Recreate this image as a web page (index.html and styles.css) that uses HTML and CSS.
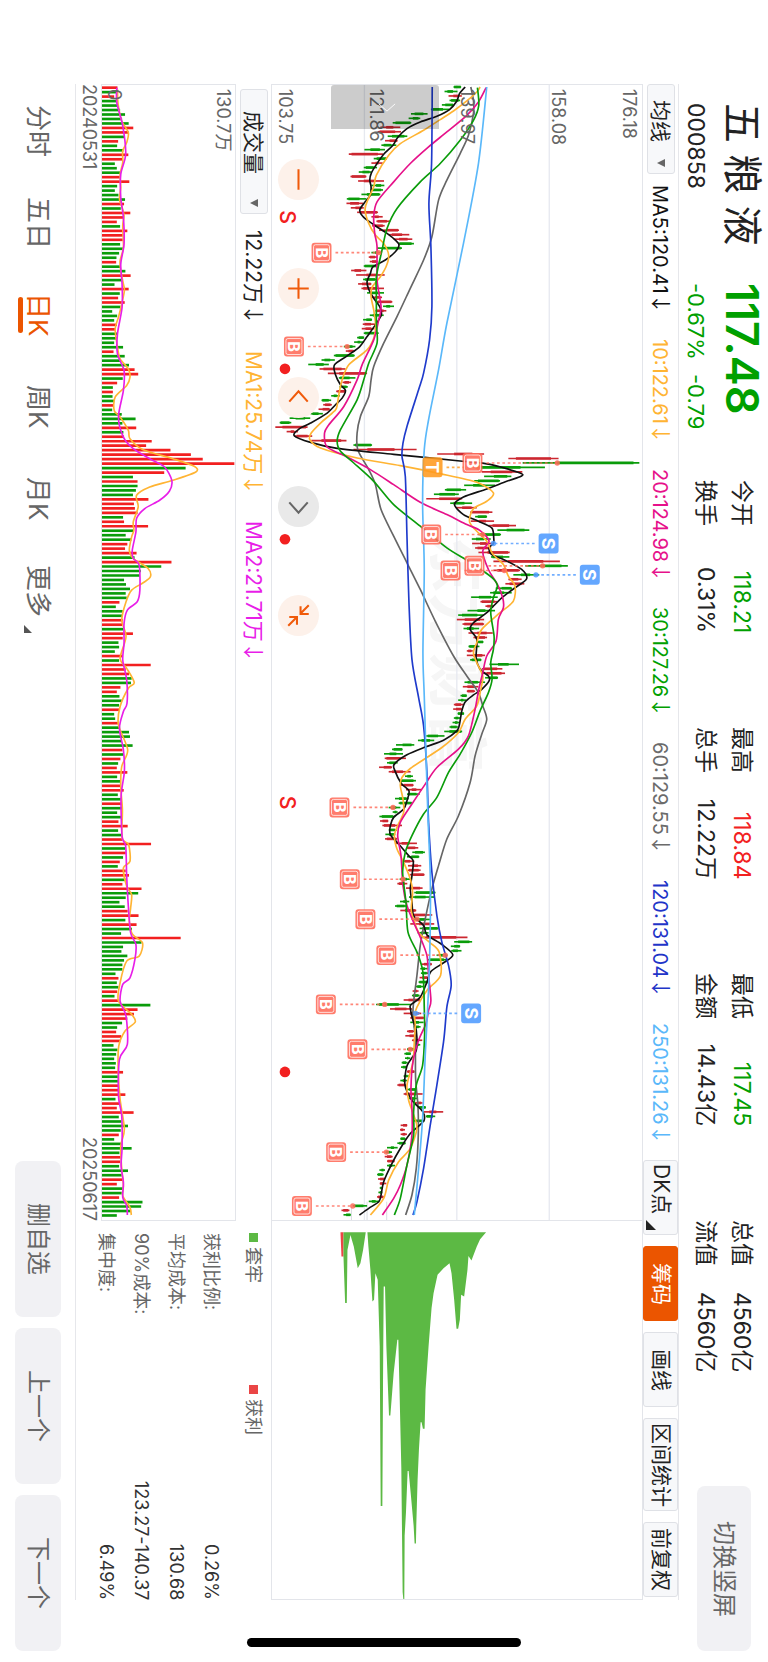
FILE: index.html
```html
<!DOCTYPE html>
<html lang="zh-CN">
<head>
<meta charset="utf-8">
<meta name="viewport" content="width=device-width, initial-scale=1">
<title>五粮液 000858</title>
<link rel="stylesheet" href="styles.css">
</head>
<body>
<main class="app">
  <header class="quote">
    <div class="quote-id">
      <h1 class="quote-name">五 粮 液</h1>
      <p class="quote-code">000858</p>
    </div>
    <div class="quote-price down">
      <p class="price">117.48</p>
      <p class="change"><span>-0.67%</span><span>-0.79</span></p>
    </div>
    <div class="quote-stats">
      <dl class="stat"><dt>今开</dt><dd class="down">118.21</dd><dt>换手</dt><dd>0.31%</dd></dl>
      <dl class="stat"><dt>最高</dt><dd class="up">118.84</dd><dt>总手</dt><dd>12.22万</dd></dl>
      <dl class="stat"><dt>最低</dt><dd class="down">117.45</dd><dt>金额</dt><dd>14.43亿</dd></dl>
      <dl class="stat"><dt>总值</dt><dd>4560亿</dd><dt>流值</dt><dd>4560亿</dd></dl>
    </div>
    <button class="soft-button rotate-button" type="button">切换竖屏</button>
  </header>

  <section class="ma-bar" aria-label="均线">
    <div class="ma-list">
      <div class="picker picker-ma">
        <select aria-label="主图指标"><option>均线</option></select>
        <svg class="picker-arrow" viewBox="0 0 8 8" aria-hidden="true"><path d="M0 4L8 0V8Z"/></svg>
      </div>
      <span class="ma5">MA5:120.41<i class="trend">↓</i></span>
      <span class="ma10">10:122.61<i class="trend">↓</i></span>
      <span class="ma20">20:124.98<i class="trend">↓</i></span>
      <span class="ma30">30:127.26<i class="trend">↓</i></span>
      <span class="ma60">60:129.55<i class="trend">↓</i></span>
      <span class="ma120">120:131.04<i class="trend">↓</i></span>
      <span class="ma250">250:131.26<i class="trend">↓</i></span>
    </div>
    <div class="tools">
      <button class="tool tool-menu" type="button">DK点<svg class="corner" viewBox="0 0 10 10" aria-hidden="true"><path d="M0 0V10H10Z"/></svg></button>
      <button class="tool active" type="button">筹码</button>
      <button class="tool" type="button">画线</button>
      <button class="tool tool-wide" type="button">区间统计</button>
      <button class="tool" type="button">前复权</button>
    </div>
  </section>

  <section class="workspace">
    <div class="price-chart">
      <span class="watermark" aria-hidden="true">东方财富</span>
      <svg id="price" class="plot" viewBox="34 14 1113 3411" preserveAspectRatio="none" role="img" aria-label="日K线"></svg>
      <ul class="axis">
        <li><span>176.18</span><span>158.08</span></li>
        <li><span>139.97</span></li>
        <li><span>121.86</span></li>
        <li><span>103.75</span></li>
      </ul>
      <button class="handle" type="button" aria-label="收起"><svg viewBox="0 0 20 10" aria-hidden="true"><path d="M1 1L10 9L19 1"/></svg></button>
      <div class="controls">
        <button class="round" type="button" aria-label="缩小"><svg viewBox="0 0 40 40" aria-hidden="true"><path d="M20 10V30"/></svg></button>
        <button class="round" type="button" aria-label="放大"><svg viewBox="0 0 40 40" aria-hidden="true"><path d="M20 10V30M10 20H30"/></svg></button>
        <button class="round" type="button" aria-label="左移"><svg viewBox="0 0 40 40" aria-hidden="true"><path d="M11 24L20 14L29 24"/></svg></button>
        <button class="round muted" type="button" aria-label="右移"><svg viewBox="0 0 40 40" aria-hidden="true"><path d="M11 16L20 26L29 16"/></svg></button>
        <button class="round" type="button" aria-label="退出全屏"><svg viewBox="0 0 40 40" aria-hidden="true"><path d="M30 10L22 18M22 11V18.500H30M10 30L18 22M11 21.500H18.500V29"/></svg></button>
      </div>
    </div>

    <div class="chip-chart">
      <svg id="chips" class="plot" viewBox="34 3423 1113 1137" preserveAspectRatio="none" role="img" aria-label="筹码分布"></svg>
    </div>

    <div class="volume">
      <div class="volume-head">
        <div class="picker picker-volume">
          <select aria-label="副图指标"><option>成交量</option></select>
          <svg class="picker-arrow" viewBox="0 0 8 8" aria-hidden="true"><path d="M0 4L8 0V8Z"/></svg>
        </div>
        <span>12.22万<i class="trend">↓</i></span>
        <span class="ma10">MA1:25.74万<i class="trend">↓</i></span>
        <span class="vma2">MA2:21.71万<i class="trend">↓</i></span>
      </div>
      <div class="volume-chart">
        <svg id="volume" class="plot" viewBox="305 42 404 3411" preserveAspectRatio="none" role="img" aria-label="成交量"></svg>
        <ul class="axis axis-volume"><li><span>130.7万</span><span>0</span></li></ul>
      </div>
      <div class="dates"><span>20240531</span><span>20250617</span></div>
    </div>

    <div class="chip-info">
      <div class="legend"><span class="key key-green">套牢</span><span class="key key-red">获利</span></div>
      <dl class="facts">
        <div><dt>获利比例:</dt><dd>0.26%</dd></div>
        <div><dt>平均成本:</dt><dd>130.68</dd></div>
        <div><dt>90%成本:</dt><dd>123.27-140.37</dd></div>
        <div><dt>集中度:</dt><dd>6.49%</dd></div>
      </dl>
    </div>
  </section>

  <footer class="bottom">
    <nav class="tabs">
      <button type="button">分时</button>
      <button type="button">五日</button>
      <button type="button" class="current">日K</button>
      <button type="button">周K</button>
      <button type="button">月K</button>
      <button type="button" class="more">更多<svg class="corner" viewBox="0 0 10 10" aria-hidden="true"><path d="M0 0V10H10Z"/></svg></button>
    </nav>
    <div class="actions">
      <button class="soft-button" type="button">删自选</button>
      <button class="soft-button" type="button">上一个</button>
      <button class="soft-button" type="button">下一个</button>
    </div>
  </footer>
  <div class="home-indicator"></div>
</main>
<script src="chart.js"></script>
</body>
</html>
```

FILE: styles.css
```css
* { box-sizing: border-box; }

body {
  margin: 0;
  background: #fff;
}

h1, p, dl, dd, ul {
  margin: 0;
  padding: 0;
  font-weight: 400;
}

ul { list-style: none; }

svg { writing-mode: horizontal-tb; }

button, select {
  margin: 0;
  padding: 0;
  border: 0;
  background: none;
  color: inherit;
  font: inherit;
  writing-mode: inherit;
  text-orientation: inherit;
}

.app {
  position: relative;
  display: flex;
  flex-direction: column;
  width: 100%;
  height: 100vh;
  min-height: 1500px;
  overflow: hidden;
  writing-mode: vertical-rl;
  text-orientation: sideways;
  font-family: Inter, "Noto Sans CJK SC", sans-serif;
  font-size: 20px;
  line-height: 28px;
  color: #222;
  white-space: nowrap;
}

.down { color: #00a000; }
.up { color: #f22020; }
.ma5 { color: #111; }
.ma10 { color: #ffb433; }
.ma20 { color: #e6118a; }
.ma30 { color: #00a000; }
.ma60 { color: #6b6b6b; }
.ma120 { color: #1f35c8; }
.ma250 { color: #5ab8fa; }
.vma2 { color: #e81ee8; }

.trend {
  font-family: "Noto Sans CJK SC", sans-serif;
  font-style: normal;
}

/* quote header */
.quote {
  display: grid;
  grid-template-columns: 180px 197px 1fr 165px;
  block-size: 89px;
  padding-block-start: 8px;
  padding-inline: 103px 11px;
}

.quote-id, .quote-price {
  display: flex;
  flex-direction: column;
  gap: 14px;
}

.quote-name {
  font-size: 40px;
  line-height: 36px;
}

.quote-code, .change {
  font-size: 23px;
  line-height: 28px;
}

.price {
  font-size: 45px;
  line-height: 36px;
  font-weight: 600;
}

.change {
  display: flex;
  gap: 14px;
  font-size: 22px;
}

.quote-stats {
  display: flex;
  justify-content: space-between;
  align-items: start;
  margin-inline-end: 113px;
}

.stat {
  display: grid;
  grid-template-columns: auto 1fr;
  inline-size: 153px;
  font-size: 23px;
  line-height: 36px;
}

.stat dd { text-align: end; }

.soft-button {
  border-radius: 8px;
  background: #f1f1f4;
  color: #666;
  font-size: 24px;
  text-align: center;
}

.rotate-button {
  block-size: 54px;
  align-self: start;
  margin-block-start: 9px;
}

/* indicator bar */
.ma-bar {
  display: flex;
  justify-content: space-between;
  align-items: center;
  block-size: 36px;
  margin-inline: 84px 62px;
  border-block-start: 1px solid #e6e7eb;
}

.ma-list {
  display: flex;
  align-items: center;
  gap: 25px;
}

.picker {
  position: relative;
  block-size: 28px;
  border: 1px solid #dfe1e6;
  border-radius: 3px;
  background: #f7f8fa;
}

.picker select {
  appearance: none;
  inline-size: 100%;
  block-size: 100%;
  padding-inline-start: 15px;
  font-size: 21px;
  line-height: 26px;
}

.picker-ma {
  inline-size: 90px;
  margin-inline-end: -14px;
}

.picker-volume {
  inline-size: 125px;
  margin-inline-end: -10px;
}

.picker-volume select { padding-inline-start: 21px; }

.picker-arrow {
  position: absolute;
  right: 9px;
  bottom: 6px;
  width: 8px;
  height: 8px;
  fill: #666;
  pointer-events: none;
}

.tools {
  display: flex;
  gap: 11px;
  padding-inline-end: 3px;
}

.tool {
  position: relative;
  inline-size: 75px;
  block-size: 35px;
  border: 1px solid #dfe1e6;
  border-radius: 3px;
  background: #f7f8fa;
  font-size: 21px;
  text-align: center;
}

.tool-wide { inline-size: 93px; }

.tool.active {
  border-color: #eb5500;
  background: #eb5500;
  color: #fff;
}

.tool-menu { padding-inline-end: 16px; }

.corner {
  position: absolute;
  left: 2px;
  bottom: 4px;
  width: 10px;
  height: 10px;
  fill: #222;
}

/* charts */
.workspace {
  flex: 1;
  display: grid;
  grid-template-columns: 3fr 1fr;
  grid-template-rows: 1fr 195px;
  min-block-size: 0;
  margin-inline: 84px 62px;
  border-block-end: 1px solid #e6e7eb;
}

.price-chart, .chip-chart {
  position: relative;
  border: 1px solid #e3e5ea;
}

.chip-chart { border-inline-start: 0; }

.plot {
  position: absolute;
  inset: 0;
  width: 100%;
  height: 100%;
}

.watermark {
  position: absolute;
  inset: 0;
  display: flex;
  align-items: center;
  justify-content: center;
  font-size: 60px;
  font-weight: 700;
  color: #f6f6f6;
}

.axis {
  position: absolute;
  inset: 0;
  display: flex;
  flex-direction: column;
  padding-inline-start: 4px;
  padding-block: 3px;
  font-size: 18px;
  line-height: 20px;
  color: #666;
}

.axis li {
  flex: 1;
  display: flex;
  flex-direction: column;
}

.axis li span:last-child { margin-block-start: auto; }

.axis-volume { padding-block: 2px; }

.handle {
  position: absolute;
  inset-block-end: 59px;
  inset-inline-start: 0;
  block-size: 108px;
  inline-size: 44px;
  border-radius: 3px 3px 0 0;
  background: rgb(0 0 0 / 20%);
}

.handle svg {
  width: 18px;
  height: 9px;
  fill: none;
  stroke: #fff;
  stroke-width: 1px;
}

.controls {
  position: absolute;
  inset-block-end: 6px;
  inset-inline-start: 74px;
  display: flex;
  gap: 68px;
}

.round {
  display: flex;
  inline-size: 41px;
  block-size: 41px;
  border-radius: 50%;
  background: #fdf1ea;
  color: #f05a0a;
}

.round.muted {
  background: #e9e9e9;
  color: #666;
}

.round svg {
  width: 41px;
  height: 41px;
  fill: none;
  stroke: currentColor;
  stroke-width: 2px;
}

.volume {
  display: flex;
  flex-direction: column;
}

.volume-head {
  display: flex;
  align-items: center;
  gap: 26px;
  block-size: 35px;
  padding-inline-start: 5px;
  font-size: 21px;
}

.volume-chart {
  position: relative;
  flex: 1;
  border: 1px solid #e3e5ea;
}

.dates {
  display: flex;
  justify-content: space-between;
  block-size: 25px;
  font-size: 18px;
  line-height: 24px;
  color: #666;
}

.chip-info {
  padding-inline-start: 12px;
  font-size: 18px;
  color: #666;
}

.legend {
  display: grid;
  grid-template-columns: 152px 1fr;
  block-size: 42px;
  line-height: 36px;
}

.key {
  display: flex;
  align-items: center;
  align-self: start;
  gap: 5px;
}

.key::before {
  content: "";
  inline-size: 9px;
  block-size: 9px;
  background: #5cb944;
}

.key-red::before { background: #ea4545; }

.facts div {
  display: flex;
  justify-content: space-between;
  line-height: 35px;
}

.facts dd { color: #333; }

/* bottom bar */
.bottom {
  display: flex;
  justify-content: space-between;
  align-items: center;
  block-size: 75px;
  padding-inline: 85px 11px;
}

.tabs {
  display: flex;
  font-size: 26px;
  line-height: 46px;
  color: #666;
}

.tabs button {
  position: relative;
  inline-size: 92px;
  text-align: center;
}

.tabs .current { color: #eb5500; }

.tabs .current::after {
  content: "";
  position: absolute;
  inset-block-end: 3px;
  inset-inline: 28px;
  block-size: 5px;
  border-radius: 3px;
  background: #eb5500;
}

.tabs .corner {
  left: 9px;
  bottom: 4px;
  width: 8px;
  height: 8px;
  fill: #555;
}

.actions {
  display: flex;
  gap: 11px;
}

.actions .soft-button {
  inline-size: 156px;
  block-size: 46px;
}

.home-indicator {
  position: absolute;
  left: 247px;
  right: 247px;
  bottom: 15px;
  height: 9px;
  border-radius: 5px;
  background: #000;
}
```

FILE: chart.js
```js
// Chart units are thirds of a pixel; price runs along x, time runs along y.
const STEP = 13.45;
const RED = "#cc2730";
const GREEN = "#0a9c0a";
const GRID = "#e6e9f0";

const candles = `g580-603 g553-592 r565-605 g568-600 g545-580 g512-568 g452-502 g445-480 g397-453 r360-420
r352-422 g382-441 r374-412 g363-408 g312-374 r265-368 g340-380 r333-367 g310-350 g295-333
r270-318 r293-371 g333-372 g330-368 g303-360 g259-318 r258-308 r271-310 r290-353 r333-367
r348-390 r335-373 r356-416 r385-447 r400-456 g413-461 g350-425 g333-365 r325-350 r328-352
g310-350 r272-318 r287-373 g308-350 r293-333 r303-371 g320-371 r333-365 r345-396 g368-401
r345-378 g328-370 g308-335 r307-345 r304-342 g310-355 g290-311 g281-310 g250-285 r256-283
g220-283 g183-223 g143-205 r177-255 r202-320 g235-285 r246-272 g237-262 r227-255 g212-238
g183-212 r188-214 r174-208 g150-187 g87-149 g57-92 r44-141 r78-112 r100-155 r152-258
g279-335 r279-469 r531-672 r745-896 g788-1139 g645-855 r665-787 g672-754 g642-720 g612-705
g554-618 g521-596 r498-606 g570-636 r588-650 r630-697 g645-681 r632-702 r685-768 g712-808
g655-723 g635-692 r636-702 r645-693 r655-749 g693-748 r700-900 g796-924 r700-780 g760-838
r745-785 r736-793 g707-756 g690-755 g633-713 r661-711 r676-701 g622-705 g594-671 r590-672
r607-672 g610-657 r625-698 r640-681 g648-670 g625-658 r620-638 r620-675 g630-664 g688-777
r665-727 r664-735 g675-714 g613-675 r608-655 r620-645 g601-620 g594-618 r581-610 r579-608
g592-612 g581-602 g577-597 g568-593 g552-606 g498-553 g473-522 g407-462 g395-427 g371-428
r373-437 g380-412 r356-395 r385-451 g434-458 g417-467 r422-460 r437-485 g440-478 g404-445
g415-456 g385-420 g397-412 g357-405 r359-384 r366-425 g385-410 g375-405 r374-410 r405-470
r438-474 g456-494 g440-477 r428-462 r443-483 r443-481 r448-493 g418-452 r411-441 r437-487
g462-526 g446-523 g419-447 g404-438 r420-468 r455-516 g455-510 r450-522 g478-535 g472-505
r487-622 g582-636 g572-600 g573-604 g529-562 g502-560 r484-515 g480-502 g482-505 r478-505
g475-505 g465-492 r457-475 g455-478 r430-480 g347-452 r389-455 r430-483 r450-492 g450-490
g460-481 r440-462 r435-470 r455-486 g462-480 g440-465 g432-452 g434-450 g424-442 g422-440
r440-463 g430-448 g420-440 r411-437 g437-470 r430-487 g445-470 r460-487 g473-497 r490-549
g497-525 g460-493 r421-441 r419-434 r421-440 g420-436 g411-436 g380-412 g375-395 r373-397
r380-403 g380-404 g357-374 g350-370 r353-374 r358-378 g358-366 g354-366 r350-370 g325-357
g277-320 r243-267 g249-271`;

const averages = {
  "#666666": "632,20 640,60 640,100 625,165 600,220 560,300 535,360 515,470 490,540 450,625 410,710 370,790 340,860 332,900 325,950 300,1010 290,1060 292,1110 325,1170 345,1215 362,1290 400,1370 440,1450 480,1530 525,1625 580,1730 620,1790 655,1840 668,1880 680,1920 665,1965 645,2030 630,2110 595,2210 560,2280 535,2360 515,2430 495,2520 480,2600 470,2690 460,2770 458,2810 465,2880 466,3000 473,3080 474,3170 468,3270 455,3350 436,3410",
  "#111111": "615,20 598,40 590,62 568,88 530,108 480,125 440,145 412,172 398,195 370,222 350,250 333,278 328,300 332,320 330,345 312,368 298,390 310,412 345,437 380,460 405,480 416,495 405,515 375,540 338,560 330,580 320,605 325,628 340,655 358,680 363,705 345,735 320,770 298,800 260,828 222,855 225,885 240,915 255,932 245,955 225,975 200,1000 150,1030 115,1048 101,1068 150,1088 230,1106 400,1124 600,1144 690,1154 780,1180 783,1190 740,1205 680,1228 610,1252 583,1275 610,1305 655,1325 695,1345 701,1375 700,1392 687,1405 695,1425 735,1442 785,1470 800,1498 765,1525 725,1555 680,1600 640,1630 630,1650 650,1680 648,1735 660,1770 685,1790 687,1805 665,1830 640,1847 615,1868 605,1895 598,1935 590,1955 550,1983 497,2003 440,2027 402,2055 403,2073 423,2113 446,2135 440,2165 430,2190 400,2215 390,2240 390,2267 415,2295 445,2330 459,2347 455,2390 450,2430 455,2470 460,2510 490,2540 500,2568 545,2597 578,2628 550,2652 512,2678 500,2710 480,2755 452,2778 450,2788 458,2825 468,2855 468,2915 440,2962 434,3020 455,3065 488,3100 490,3128 450,3165 420,3210 395,3255 370,3310 362,3350 355,3370 325,3390 297,3410",
  "#ffb433": "660,20 650,35 620,62 580,92 540,118 490,150 420,190 385,225 348,285 340,320 322,360 314,388 325,430 345,465 370,490 385,525 378,558 360,590 335,622 332,650 340,690 346,740 340,775 320,810 265,855 245,900 235,945 228,985 215,1000 180,1030 152,1060 148,1080 180,1105 290,1135 420,1158 540,1182 650,1208 700,1240 680,1265 640,1287 628,1325 645,1350 680,1385 697,1422 730,1455 745,1490 765,1520 760,1565 720,1600 665,1650 650,1690 640,1720 650,1750 668,1790 662,1830 650,1880 615,1920 595,1960 545,2005 450,2068 425,2095 420,2120 428,2160 430,2200 412,2240 402,2270 410,2310 430,2350 450,2400 457,2440 453,2495 468,2545 478,2565 510,2592 537,2620 541,2690 500,2735 470,2785 463,2810 465,2840 462,2890 458,2950 440,3020 445,3065 462,3115 470,3150 450,3210 415,3250 385,3305 370,3360 330,3410",
  "#e6118a": "678,22 655,65 620,105 560,155 505,200 450,250 400,305 350,365 340,410 343,460 350,500 350,600 362,680 355,720 340,780 305,855 290,900 250,980 205,1035 192,1060 200,1102 260,1132 330,1170 400,1215 480,1268 560,1305 620,1335 660,1353 687,1385 668,1415 685,1470 712,1515 728,1555 730,1585 715,1620 708,1685 680,1730 668,1780 655,1835 645,1890 625,1970 595,2010 530,2065 495,2115 455,2175 420,2230 412,2270 422,2330 428,2420 440,2480 462,2535 480,2575 500,2630 505,2690 512,2765 505,2795 497,2835 475,2885 458,2950 452,3030 455,3090 455,3170 440,3260 420,3320 400,3360 366,3410",
  "#0a9c0a": "652,22 656,75 640,120 600,180 540,250 480,305 410,385 380,445 365,510 348,590 348,650 348,730 350,790 325,850 310,900 290,960 240,1050 230,1085 240,1115 280,1150 340,1205 400,1275 480,1340 560,1405 620,1442 660,1468 700,1498 712,1520 700,1555 692,1600 702,1670 700,1710 692,1750 696,1800 685,1840 660,1895 635,1960 600,2025 565,2080 530,2155 490,2205 455,2270 435,2320 427,2380 437,2470 443,2560 470,2620 488,2680 492,2785 493,2870 487,2960 468,3020 460,3100 460,3170 440,3260 420,3360 402,3410",
  "#1f3bcc": "516,20 514,250 506,370 512,500 515,680 508,780 490,880 475,930 440,1040 428,1090 425,1130 435,1190 440,1370 446,1570 455,1740 475,1855 490,1940 500,2080 505,2230 515,2380 530,2510 545,2590 565,2660 573,2720 560,2785 550,2890 525,3050 510,3140 490,3270 470,3370 458,3410",
  "#5ab8fa": "680,20 655,250 610,490 560,730 535,870 505,1020 492,1110 487,1270 492,1470 488,1720 492,1850 498,2050 503,2210 510,2390 510,2550 505,2730 495,2930 487,3120 475,3270 462,3410"
};

// kind, label x, y, anchor x
const marks = [
  ["B", 183, 518, 355], ["B", 100, 800, 260], ["T", 517, 1163, 655], ["B", 637, 1150, 892],
  ["B", 513, 1365, 668], ["B", 643, 1459, 848], ["B", 571, 1473, 733], ["S", 866, 1392, 700],
  ["S", 990, 1486, 828], ["B", 237, 2185, 398], ["B", 268, 2401, 428], ["B", 315, 2521, 470],
  ["B", 378, 2629, 555], ["B", 196, 2777, 373], ["S", 633, 2804, 466], ["B", 291, 2912, 450],
  ["B", 227, 3221, 378], ["B", 124, 3383, 277]
];

const volumes = `r352 g350 r342 g350 g352 g360 g375 g366 g386 r400 r386 g374 r354 g351 g370 r385 r368 g344 g350 g362
r360 r388 g351 g344 g355 g375 r372 g362 r391 r370 r350 g360 r382 r368 r368 g360 g370 g357 g349 r348
g362 g376 r392 g366 g343 r386 g359 r354 r374 g361 g336 g351 g342 r350 r345 g351 g351 g342 g369 r340
g374 g360 g387 r404 r415 g368 r351 g338 r338 g337 g342 r340 g336 g365 g407 g367 r409 g370 r372 r456
r439 r513 r575 r611 r707 g559 r494 g399 r413 g413 g408 g399 r446 r402 r405 r413 g369 r372 r445 g402
g377 g394 r382 r375 r410 g404 r516 g485 g423 g420 g372 g378 g390 g377 g380 r358 g347 g368 g368 r368
r366 g370 r399 r368 g355 g357 g344 r368 g357 r453 r377 r387 g395 g393 r361 r350 g358 g365 g357 r357
g342 g345 r353 g360 g387 g390 g365 g398 r367 g370 r361 g354 r350 r382 g351 g360 r360 r371 g353 g362
r366 g367 g351 g366 r355 r383 g354 g366 r366 r454 g375 r377 g369 r359 g353 r377 r387 g377 r367 r425
g415 g377 g358 g374 r383 r416 g376 r410 g396 g363 r544 g425 g369 g364 g382 g372 g367 g367 g346 r355
g350 g355 r351 g343 r357 g452 r413 r402 r382 g366 g351 r348 r363 r361 g340 g352 g348 g342 g347 g345
r369 g354 g354 r356 r355 r376 g346 r360 r350 r401 g356 g364 g384 g362 r356 g342 g365 g395 g358 r362
r360 g357 g384 g365 r370 r350 g368 g365 r357 g428 g424 g392 g350`;

const volumeAverages = {
  "#ffb433": "352,55 354,100 365,150 385,185 380,215 368,240 368,275 360,310 362,350 358,385 366,410 372,435 368,465 370,530 360,570 362,600 370,640 373,660 365,700 355,740 345,775 352,830 360,865 385,895 390,920 380,945 345,980 342,1020 360,1040 385,1080 390,1105 430,1138 520,1165 585,1188 590,1205 520,1230 450,1250 410,1275 415,1310 400,1355 402,1380 395,1400 388,1440 400,1465 445,1495 452,1520 430,1538 395,1560 378,1595 365,1650 378,1700 360,1765 380,1795 403,1838 385,1855 360,1910 355,1965 383,2040 365,2090 362,2150 367,2220 366,2305 386,2325 390,2375 370,2395 380,2450 395,2475 392,2515 388,2555 398,2595 428,2620 418,2660 380,2675 360,2740 355,2795 395,2835 406,2858 375,2885 356,2930 354,3000 360,3090 373,3180 362,3230 365,3300 370,3350 368,3380 390,3415 394,3438",
  "#e81ee8": "350,50 350,95 368,165 377,250 362,310 362,380 370,440 372,520 362,580 366,640 366,710 352,790 352,850 372,900 370,960 355,1040 370,1100 400,1135 450,1165 495,1190 517,1230 510,1262 480,1290 435,1315 410,1345 408,1385 397,1440 400,1465 418,1485 420,1560 412,1595 382,1620 372,1660 372,1720 368,1770 380,1830 381,1900 370,1925 358,1975 370,2040 373,2105 363,2180 366,2300 377,2330 380,2420 385,2510 392,2590 408,2625 405,2670 390,2725 368,2745 360,2795 378,2840 382,2925 358,2970 355,3080 365,3140 366,3235 363,3290 370,3340 368,3385 380,3410 382,3438"
};

const chipShape = "249,3457 249,3530 254,3670 259,3670 261,3510 270,3465 280,3500 292,3565 300,3550 308,3510 316,3457 321,3457 324,3500 330,3570 336,3665 341,3660 345,3580 352,3600 358,3800 361,4280 366,4280 368,3900 370,3620 374,3620 378,3800 386,4008 390,4008 400,3880 411,3780 414,3780 418,3950 423,4165 427,4540 429,4560 432,4560 433,4370 437,4300 442,4175 445,4175 452,4250 460,4340 463,4393 467,4393 468,4340 472,4200 476,4110 481,4028 484,4028 488,4048 493,4048 496,3930 505,3800 514,3685 520,3640 532,3585 550,3565 568,3550 574,3580 582,3660 589,3747 594,3747 599,3720 603,3645 612,3650 622,3570 625,3528 634,3542 650,3500 660,3478 678,3457";

function curve(text) {
  const p = text.split(" ").map(s => s.split(",").map(Number));
  let d = `M${p[0]}`;
  for (let i = 0; i < p.length - 1; i++) {
    const a = p[i - 1] || p[i], b = p[i], c = p[i + 1], e = p[i + 2] || c;
    d += `C${b[0] + (c[0] - a[0]) / 7} ${b[1] + (c[1] - a[1]) / 7} ${c[0] - (e[0] - b[0]) / 7} ${c[1] - (e[1] - b[1]) / 7} ${c}`;
  }
  return d;
}

function lines(set) {
  return Object.entries(set).map(([color, pts]) =>
    `<path d="${curve(pts)}" fill="none" stroke="${color}" stroke-width="5"/>`).join("");
}

function drawPrice() {
  let out = "";
  for (const x of [312, 590, 868]) out += `<path d="M${x} 14V3425" stroke="${GRID}" stroke-width="4"/>`;
  out += `<path d="M273 3385V3425M320 3370V3425M379 3370V3425" stroke="#d9dce2" stroke-width="3"/>`;
  candles.split(/\s+/).forEach((c, i) => {
    const color = c[0] === "r" ? RED : GREEN;
    const [lo, hi] = c.slice(1).split("-").map(Number);
    const y = 20 + STEP * i;
    const start = lo + (hi - lo) * (0.08 + (i * 7 % 5) * 0.07);
    const end = hi - (hi - lo) * (0.05 + (i * 3 % 4) * 0.1);
    out += `<path d="M${lo} ${y}H${hi}" stroke="${color}" stroke-width="5"/>`;
    out += `<path d="M${start} ${y}H${end}" stroke="${color}" stroke-width="8"/>`;
  });
  out += lines(averages);
  const fills = { B: "#ff6a58", S: "#4f9bff", T: "#ff9a1f" };
  for (const [kind, x, y, anchor] of marks) {
    const color = fills[kind];
    const edge = x < anchor ? x + 42 : x - 42;
    out += `<path d="M${edge} ${y}H${anchor}" stroke="${color}" stroke-width="5" stroke-dasharray="8 8" opacity=".8"/>`;
    out += `<circle cx="${anchor}" cy="${y}" r="8" fill="${color}" opacity=".85"/>`;
    out += `<rect x="${x - 30}" y="${y - 30}" width="60" height="60" rx="9" fill="${color}" opacity=".88"/>`;
    if (kind === "B") out += `<rect x="${x - 24}" y="${y - 24}" width="48" height="48" rx="6" fill="none" stroke="#fff" stroke-width="3" opacity=".75"/>`;
    const size = kind === "B" ? 48 : 54;
    out += `<text transform="translate(${x - size * 0.36} ${y}) rotate(90)" text-anchor="middle" font-size="${size}" font-weight="700" fill="#fff">${kind}</text>`;
  }
  for (const y of [411, 2171]) {
    out += `<text transform="translate(57 ${y}) rotate(90)" text-anchor="middle" font-size="64" font-weight="500" fill="#f22020">S</text>`;
  }
  for (const y of [867, 1379, 2980]) out += `<circle cx="73" cy="${y}" r="16" fill="#f22020"/>`;
  document.getElementById("price").innerHTML = out;
}

function drawVolume() {
  let out = "";
  volumes.split(/\s+/).forEach((v, i) => {
    const color = v[0] === "r" ? "#f22020" : GREEN;
    out += `<path d="M305 ${50 + STEP * i}H${v.slice(1)}" stroke="${color}" stroke-width="8"/>`;
  });
  document.getElementById("volume").innerHTML = out + lines(volumeAverages);
}

function drawChips() {
  document.getElementById("chips").innerHTML =
    `<path d="M240 3457H249V3530H243Z" fill="#ea4545"/><polygon points="${chipShape}" fill="#5cb944"/>`;
}

drawPrice();
drawVolume();
drawChips();
```
